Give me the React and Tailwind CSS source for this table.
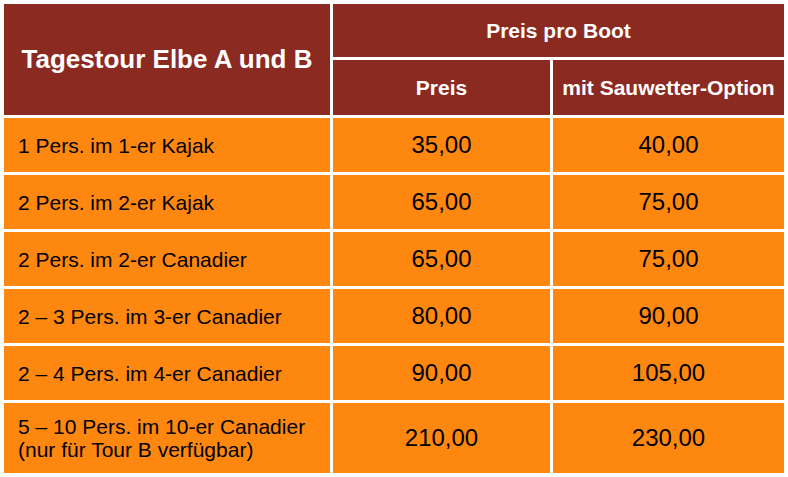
const rows = [
  { label: ["1 Pers. im 1-er Kajak"], preis: "35,00", sauwetter: "40,00" },
  { label: ["2 Pers. im 2-er Kajak"], preis: "65,00", sauwetter: "75,00" },
  { label: ["2 Pers. im 2-er Canadier"], preis: "65,00", sauwetter: "75,00" },
  { label: ["2 – 3 Pers. im 3-er Canadier"], preis: "80,00", sauwetter: "90,00" },
  { label: ["2 – 4 Pers. im 4-er Canadier"], preis: "90,00", sauwetter: "105,00" },
  {
    label: ["5 – 10 Pers. im 10-er Canadier", "(nur für Tour B verfügbar)"],
    preis: "210,00",
    sauwetter: "230,00",
  },
];

export default function App() {
  return (
    <div
      className="w-[788px] h-[477px] bg-white p-[4px]"
      style={{ fontFamily: '"Liberation Sans", Arial, sans-serif' }}
    >
      <div className="grid grid-cols-[326px_217px_231px] grid-rows-[53px_55px_54px_54px_54px_54px_54px_70px] gap-[3px]">
        {/* HEADER */}
        <div className="row-span-2 bg-[#8b2a21] flex items-center justify-center text-white font-bold text-[26px]">
          Tagestour Elbe A und B
        </div>
        <div className="col-span-2 bg-[#8b2a21] flex items-center justify-center text-white font-bold text-[21px]">
          Preis pro Boot
        </div>
        <div className="bg-[#8b2a21] flex items-center justify-center text-white font-bold text-[21px]">
          Preis
        </div>
        <div className="bg-[#8b2a21] flex items-center justify-center text-white font-bold text-[21px]">
          mit Sauwetter-Option
        </div>

        {/* BODY */}
        {rows.map((r, i) => (
          <div key={i} className="contents">
            <div className="bg-[#fe880f] flex flex-col justify-center pl-[14px] text-black text-[21px] leading-[23px]">
              {r.label.map((l, j) => (
                <span key={j}>{l}</span>
              ))}
            </div>
            <div className="bg-[#fe880f] flex items-center justify-center text-black text-[24px]">
              {r.preis}
            </div>
            <div className="bg-[#fe880f] flex items-center justify-center text-black text-[24px]">
              {r.sauwetter}
            </div>
          </div>
        ))}
      </div>
    </div>
  );
}
